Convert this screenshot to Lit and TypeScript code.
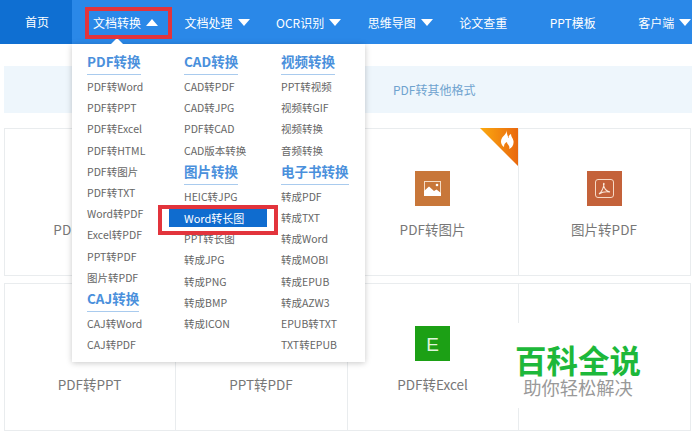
import { LitElement, html, css, svg, nothing } from "lit";
import { customElement } from "lit/decorators.js";

type MenuEntry = { head?: string; label?: string; active?: boolean };
type Card = { label: string; icon?: "image" | "pdf" | "excel"; hot?: boolean };

const h = (head: string): MenuEntry => ({ head });
const i = (label: string): MenuEntry => ({ label });

const NAV = [
  { label: "文档转换", arrow: "up" },
  { label: "文档处理", arrow: "down" },
  { label: "OCR识别", arrow: "down" },
  { label: "思维导图", arrow: "down" },
  { label: "论文查重" },
  { label: "PPT模板", wide: true },
  { label: "客户端", arrow: "down", wide: true },
];

const MENU: MenuEntry[][] = [
  [
    h("PDF转换"),
    ...["PDF转Word", "PDF转PPT", "PDF转Excel", "PDF转HTML", "PDF转图片", "PDF转TXT", "Word转PDF", "Excel转PDF", "PPT转PDF", "图片转PDF"].map(i),
    h("CAJ转换"),
    i("CAJ转Word"),
    i("CAJ转PDF"),
  ],
  [
    h("CAD转换"),
    ...["CAD转PDF", "CAD转JPG", "PDF转CAD", "CAD版本转换"].map(i),
    h("图片转换"),
    i("HEIC转JPG"),
    { label: "Word转长图", active: true },
    ...["PPT转长图", "转成JPG", "转成PNG", "转成BMP", "转成ICON"].map(i),
  ],
  [
    h("视频转换"),
    ...["PPT转视频", "视频转GIF", "视频转换", "音频转换"].map(i),
    h("电子书转换"),
    ...["转成PDF", "转成TXT", "转成Word", "转成MOBI", "转成EPUB", "转成AZW3", "EPUB转TXT", "TXT转EPUB"].map(i),
  ],
];

const CARDS: Card[] = [
  { label: "PDF转Word" },
  { label: "" },
  { label: "PDF转图片", icon: "image", hot: true },
  { label: "图片转PDF", icon: "pdf" },
  { label: "PDF转PPT" },
  { label: "PPT转PDF" },
  { label: "PDF转Excel", icon: "excel" },
  { label: "" },
];

@customElement("app-root")
export class AppRoot extends LitElement {
  static styles = css`
    :host {
      display: block;
      position: relative;
      width: 692px;
      height: 433px;
      overflow: hidden;
      background: #fff;
      font-family: "Noto Sans CJK SC", "Noto Sans", sans-serif;
      color: #666;
    }

    .nav {
      display: flex;
      align-items: center;
      gap: 26.5px;
      height: 44px;
      background: #2a88e8;
      color: #fff;
      font-size: 12px;
      white-space: nowrap;
    }
    .home {
      flex-shrink: 0;
      box-sizing: border-box;
      width: 72px;
      height: 44px;
      margin-right: -5.5px;
      padding-left: 2px;
      line-height: 44px;
      text-align: center;
      background: #0f6fd2;
    }
    .nav-item {
      flex-shrink: 0;
      display: flex;
      align-items: center;
      gap: 5px;
    }
    .nav-item.wide {
      margin-left: 16px;
    }
    .arrow {
      width: 12px;
      height: 7px;
      fill: #fff;
    }

    .band {
      margin: 22px 0 15px 4px;
      height: 47px;
      padding-left: 389px;
      line-height: 47px;
      background: #eef6fc;
      color: #6fa3cf;
      font-size: 12px;
    }

    .cards {
      display: grid;
      grid-template-columns: 171px 172px 171px 172px;
      grid-auto-rows: 148px;
      row-gap: 7px;
      margin-left: 4px;
    }
    .card {
      position: relative;
      display: flex;
      flex-direction: column;
      align-items: center;
      box-sizing: border-box;
      margin-right: -1px;
      padding: 42px 1px 0 0;
      border: 1px solid #e9ecee;
      font-size: 13.5px;
      color: #777;
    }
    .icon {
      width: 35px;
      height: 35px;
      flex-shrink: 0;
    }
    .label {
      margin-top: 13px;
      line-height: 20px;
    }
    .hot {
      position: absolute;
      top: -1px;
      right: 0;
      width: 38px;
      height: 38px;
    }

    .menu {
      position: absolute;
      top: 44px;
      left: 72px;
      width: 293px;
      height: 318px;
      box-sizing: border-box;
      display: grid;
      grid-template-columns: 97px 97px 97px;
      padding: 6px 0 0 15px;
      background: #fff;
      box-shadow: 0 1px 6px rgba(0, 0, 0, 0.22);
    }
    .caret {
      position: absolute;
      top: -6px;
      left: 39px;
      width: 0;
      height: 0;
      border-left: 6px solid transparent;
      border-right: 6px solid transparent;
      border-bottom: 6px solid #fff;
    }
    .head {
      display: table;
      height: 25px;
      box-sizing: border-box;
      margin-bottom: 1px;
      line-height: 22px;
      font-size: 13.5px;
      font-weight: 700;
      color: #4a90dc;
      border-bottom: 1px solid #a9cbee;
    }
    .head:not(:first-child) {
      margin-top: -1px;
    }
    .item {
      height: 21.2px;
      line-height: 21.2px;
      font-size: 10.5px;
      color: #666;
      white-space: nowrap;
    }
    .item.active {
      height: 18px;
      margin: 2px 0 1.2px -15px;
      padding-left: 15px;
      width: 83px;
      line-height: 18px;
      font-size: 11px;
      color: #fff;
      background: #0f6ccf;
    }

    .mark {
      position: absolute;
      box-sizing: border-box;
      border: 4px solid #e2343c;
      pointer-events: none;
    }
    .mark.tab {
      top: 7px;
      left: 85px;
      width: 87px;
      height: 32px;
    }
    .mark.entry {
      top: 205px;
      left: 158px;
      width: 120px;
      height: 30px;
    }

    .watermark {
      position: absolute;
      top: 323px;
      left: 505px;
      width: 163px;
      height: 85px;
      box-sizing: border-box;
      padding-right: 17px;
      display: flex;
      flex-direction: column;
      align-items: center;
      background: #fff;
    }
    .brand {
      margin-top: 20px;
      line-height: 32px;
      font-size: 31.5px;
      font-weight: 700;
      color: #1db83a;
    }
    .slogan {
      line-height: 24px;
      font-size: 18.3px;
      color: #999;
    }
  `;

  arrow(dir: string) {
    return html`<svg class="arrow" viewBox="0 0 12 7">
      <path d=${dir === "up" ? "M6 0L12 7H0Z" : "M0 0H12L6 7Z"}></path>
    </svg>`;
  }

  icon(kind: Card["icon"]) {
    if (kind === "image") {
      return html`<svg class="icon" viewBox="0 0 35 35">
        <rect width="35" height="35" fill="#c8773a"></rect>
        <rect x="9.5" y="10.5" width="16" height="13" fill="none" stroke="#f4dcc6" stroke-width="1"></rect>
        <path d="M9 25V20L14 15.5L19 20L21.5 18.5L26 22V25Z" fill="#fff"></path>
        <circle cx="22" cy="14" r="1.3" fill="#fff"></circle>
      </svg>`;
    }
    if (kind === "pdf") {
      return html`<svg class="icon" viewBox="0 0 35 35">
        <rect width="35" height="35" fill="#c4623a"></rect>
        <rect x="8.5" y="8.5" width="18" height="18" rx="2.5" fill="none" stroke="#f6d9c6" stroke-width="1"></rect>
        <path d="M12 23C14 21.500 16 18 17 13.500C17.300 12 16.400 12 16.500 13.500C16.800 17 19 20 23 21C20 20.500 15 21 12 23Z" fill="none" stroke="#fbe9dc" stroke-width="1.100"></path>
      </svg>`;
    }
    if (kind === "excel") {
      return html`<svg class="icon" viewBox="0 0 35 35">
        <rect width="35" height="35" fill="#1ca015"></rect>
        <text x="17.500" y="25" text-anchor="middle" font-size="19" fill="#dff5dc" font-family="Liberation Sans, sans-serif">E</text>
      </svg>`;
    }
    return html`<div class="icon"></div>`;
  }

  hotBadge() {
    return svg`<svg class="hot" viewBox="0 0 38 38">
      <defs>
        <linearGradient id="hot" x1="0" y1="0" x2="1" y2="0">
          <stop offset="0" stop-color="#fbaa10"></stop>
          <stop offset="1" stop-color="#e9680e"></stop>
        </linearGradient>
      </defs>
      <path d="M0 0H38V38Z" fill="url(#hot)"></path>
      <path d="M26 2C27 6 24 7 22 10C20 13 21 17 24 19C24 16 25 15 27 14C27 16 28 16 29 18C29.500 19 29.500 20 29 21C32 20 34 17 33.500 13C33 10 31 9 31 6C29 7 28.500 8 28.500 10C27.500 8 27 5 26 2Z" fill="#fff"></path>
    </svg>`;
  }

  render() {
    return html`
      <div class="nav">
        <div class="home">首页</div>
        ${NAV.map(
          (n) => html`<div class="nav-item ${n.wide ? "wide" : ""}">
            <span>${n.label}</span>${n.arrow ? this.arrow(n.arrow) : nothing}
          </div>`
        )}
      </div>

      <div class="band">PDF转其他格式</div>

      <div class="cards">
        ${CARDS.map(
          (c) => html`<div class="card">
            ${c.hot ? this.hotBadge() : nothing} ${this.icon(c.icon)}
            <div class="label">${c.label}</div>
          </div>`
        )}
      </div>

      <div class="menu">
        <div class="caret"></div>
        ${MENU.map(
          (col) => html`<div>
            ${col.map((e) =>
              e.head
                ? html`<div class="head">${e.head}</div>`
                : html`<div class="item ${e.active ? "active" : ""}">${e.label}</div>`
            )}
          </div>`
        )}
      </div>

      <div class="mark tab"></div>
      <div class="mark entry"></div>

      <div class="watermark">
        <div class="brand">百科全说</div>
        <div class="slogan">助你轻松解决</div>
      </div>
    `;
  }
}
